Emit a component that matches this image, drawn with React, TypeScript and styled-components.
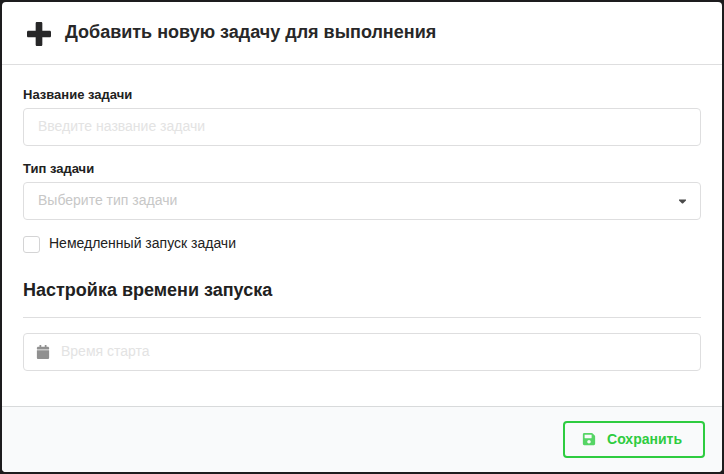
import React from "react";
import styled, { createGlobalStyle } from "styled-components";
import { FaCalendar, FaSave } from "react-icons/fa";

const GlobalStyle = createGlobalStyle`
  *, *::before, *::after { box-sizing: border-box; }
  html, body { margin: 0; }
  body {
    background: #1d1c1e;
    color: #212121;
    font: 14px/18px "Liberation Sans", Arial, sans-serif;
  }
  button, input, select { font: inherit; }
`;

const Page = styled.div`
  min-height: 100vh;
  padding: 2px;
  display: flex;
`;

const Modal = styled.form`
  flex: 1;
  display: flex;
  flex-direction: column;
  background: #fff;
  border-radius: 4px;
  overflow: hidden;
`;

const Header = styled.header`
  display: flex;
  align-items: center;
  gap: 14px;
  padding: 17px 21px 15px 25px;
  border-bottom: 1px solid #dededf;
`;

const PlusIcon = styled.svg`
  width: 24px;
  height: 30px;
  fill: #272728;
`;

const Title = styled.h1`
  margin: 0;
  padding-bottom: 4px;
  font-size: 18px;
  line-height: 24px;
  color: #272728;
`;

const Content = styled.main`
  flex: 1;
  padding: 21px;
`;

const Field = styled.div`
  margin-bottom: 14px;
`;

const Label = styled.label`
  display: block;
  margin-bottom: 4px;
  font-size: 13px;
  font-weight: bold;
`;

const Control = styled.div`
  display: flex;
  position: relative;
`;

const TextInput = styled.input<{ $withIcon?: boolean }>`
  width: 100%;
  height: 38px;
  padding: 0 14px 2px ${(p) => (p.$withIcon ? "37px" : "14px")};
  border: 1px solid #dededf;
  border-radius: 4px;
  background: #fff;
  color: #212121;
  outline: 0;
  &::placeholder { color: #e3e3e3; opacity: 1; }
  &:focus { border-color: #85b7d9; }
`;

const Select = styled.select`
  appearance: none;
  width: 100%;
  height: 38px;
  padding: 0 34px 2px 14px;
  border: 1px solid #dededf;
  border-radius: 4px;
  background: #fff;
  color: #c7c7c7;
  outline: 0;
  &:focus { border-color: #85b7d9; }
`;

const Caret = styled.svg`
  position: absolute;
  right: 14px;
  top: 17px;
  width: 9px;
  height: 5px;
  fill: #4a4a4a;
  pointer-events: none;
`;

const CalendarIcon = styled(FaCalendar)`
  position: absolute;
  left: 13px;
  top: 12px;
  width: 14px;
  height: 14px;
  color: #909090;
  pointer-events: none;
`;

const CheckLabel = styled.label`
  display: flex;
  align-items: center;
  gap: 9px;
`;

const CheckText = styled.span`
  padding-bottom: 2px;
`;

const Checkbox = styled.input`
  appearance: none;
  width: 17px;
  height: 17px;
  margin: 0;
  border: 1px solid #d4d4d5;
  border-radius: 3px;
  background: #fff;
  &:checked { background: #2ecc40; }
`;

const SectionTitle = styled.h2`
  margin: 23px 0 15px;
  padding-bottom: 14px;
  border-bottom: 1px solid #dededf;
  font-size: 18px;
  line-height: 26px;
`;

const Footer = styled.footer`
  display: flex;
  justify-content: flex-end;
  padding: 14px 17px;
  background: #f9fafb;
  border-top: 1px solid #d8dadb;
`;

const SaveButton = styled.button`
  display: flex;
  align-items: center;
  gap: 11px;
  height: 37px;
  padding: 0 21px 2px 17px;
  border: 2px solid #2ecc40;
  border-radius: 4px;
  background: transparent;
  color: #2ecc40;
  font-weight: bold;
`;

const SaveIcon = styled(FaSave)`
  width: 14px;
  height: 14px;
  opacity: 0.8;
`;

export default function App() {
  return (
    <>
      <GlobalStyle />
      <Page>
        <Modal onSubmit={(e) => e.preventDefault()}>
          <Header>
            <PlusIcon viewBox="0 0 448 512" aria-hidden="true">
              <path d="M448 294.2v-76.4c0-13.3-10.7-24-24-24H286.2V56c0-13.3-10.7-24-24-24h-76.4c-13.3 0-24 10.7-24 24v137.8H24c-13.3 0-24 10.7-24 24v76.4c0 13.3 10.7 24 24 24h137.8V456c0 13.3 10.7 24 24 24h76.4c13.3 0 24-10.7 24-24V318.2H424c13.3 0 24-10.7 24-24z" />
            </PlusIcon>
            <Title>Добавить новую задачу для выполнения</Title>
          </Header>
          <Content>
            <Field>
              <Label htmlFor="task-name">Название задачи</Label>
              <TextInput id="task-name" placeholder="Введите название задачи" />
            </Field>
            <Field>
              <Label htmlFor="task-type">Тип задачи</Label>
              <Control>
                <Select id="task-type" defaultValue="">
                  <option value="">Выберите тип задачи</option>
                </Select>
                <Caret viewBox="0 0 9 5" aria-hidden="true">
                  <path d="M1 0.5h7v1L4.9 4.6h-0.8L1 1.5z" />
                </Caret>
              </Control>
            </Field>
            <CheckLabel>
              <Checkbox type="checkbox" />
              <CheckText>Немедленный запуск задачи</CheckText>
            </CheckLabel>
            <SectionTitle>Настройка времени запуска</SectionTitle>
            <Control>
              <CalendarIcon aria-hidden="true" />
              <TextInput $withIcon placeholder="Время старта" aria-label="Время старта" />
            </Control>
          </Content>
          <Footer>
            <SaveButton type="submit">
              <SaveIcon aria-hidden="true" />
              Сохранить
            </SaveButton>
          </Footer>
        </Modal>
      </Page>
    </>
  );
}
